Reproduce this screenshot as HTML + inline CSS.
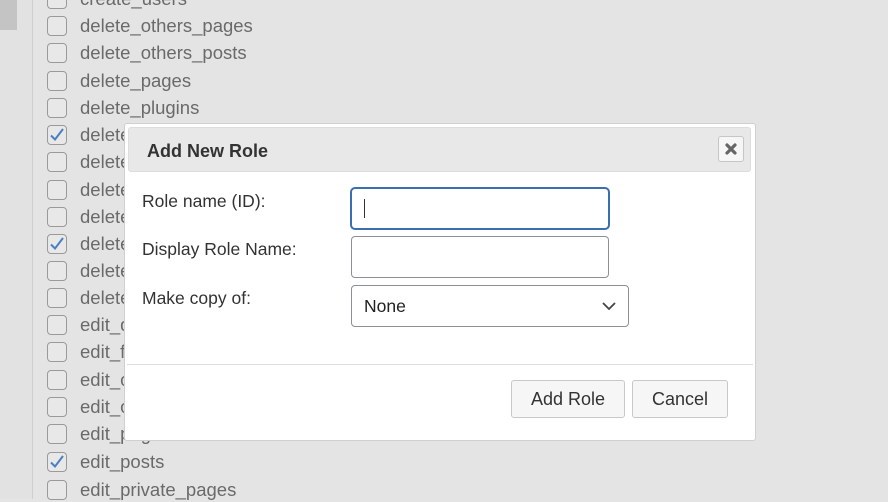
<!DOCTYPE html>
<html><head><style>
body{margin:0;width:888px;height:499px;overflow:hidden;background:#e4e4e4;font-family:"Liberation Sans",Arial,sans-serif;position:relative}
.side{position:absolute;left:0;top:0;width:32px;height:499px;border-right:1px solid #cfcfcf;background:#e2e2e2}
.side i{position:absolute;left:0;top:0;width:17px;height:30px;background:#c4c4c4}
.row{position:absolute;left:47px;height:22px;width:400px}
.cb{position:absolute;left:0;top:0;width:18px;height:18px;border:1.5px solid #9a9a9a;border-radius:4px;background:#e8e8e8}
.row span{position:absolute;left:33px;top:-1px;font-size:18.5px;color:#6a6a6a;line-height:22px;white-space:nowrap}
.dlg{position:absolute;left:124px;top:123px;width:630px;height:316px;background:#fff;border:1px solid #d0d0d0;border-radius:3px}
.tb{position:absolute;left:3px;top:3px;width:623px;height:45px;background:#e8e8e8;border:1px solid #ddd;border-radius:3px;box-sizing:border-box}
.tb b{position:absolute;left:18px;top:13px;font-size:18px;color:#333}
.x{position:absolute;left:589px;top:8px;width:26px;height:26px;border:1px solid #c6c6c6;border-radius:3px;background:#f6f6f6;box-sizing:border-box}
.lbl{position:absolute;left:17px;font-size:17.5px;color:#333}
.in{position:absolute;box-sizing:border-box;border:1px solid #8c8f94;border-radius:4px;background:#fff}
.btn{position:absolute;top:256px;height:38px;box-sizing:border-box;border:1px solid #c8c8c8;border-radius:3px;background:#f6f6f6;font-size:18px;color:#333;text-align:center;line-height:36px}
</style></head><body>
<div class="side"><i></i></div>
<div class="row" style="top:-11px"><div class="cb"></div><span>create_users</span></div>
<div class="row" style="top:16px"><div class="cb"></div><span>delete_others_pages</span></div>
<div class="row" style="top:43px"><div class="cb"></div><span>delete_others_posts</span></div>
<div class="row" style="top:71px"><div class="cb"></div><span>delete_pages</span></div>
<div class="row" style="top:98px"><div class="cb"></div><span>delete_plugins</span></div>
<div class="row" style="top:125px"><div class="cb"><svg width="18" height="18" viewBox="0 0 18 18"><path d="M3 9.5 L7 13.5 L15 3" stroke="#4a7fc1" stroke-width="2" fill="none"/></svg></div><span>delete_posts</span></div>
<div class="row" style="top:152px"><div class="cb"></div><span>delete_private_pages</span></div>
<div class="row" style="top:180px"><div class="cb"></div><span>delete_private_posts</span></div>
<div class="row" style="top:207px"><div class="cb"></div><span>delete_published_pages</span></div>
<div class="row" style="top:234px"><div class="cb"><svg width="18" height="18" viewBox="0 0 18 18"><path d="M3 9.5 L7 13.5 L15 3" stroke="#4a7fc1" stroke-width="2" fill="none"/></svg></div><span>delete_published_posts</span></div>
<div class="row" style="top:261px"><div class="cb"></div><span>delete_themes</span></div>
<div class="row" style="top:288px"><div class="cb"></div><span>delete_users</span></div>
<div class="row" style="top:315px"><div class="cb"></div><span>edit_dashboard</span></div>
<div class="row" style="top:342px"><div class="cb"></div><span>edit_files</span></div>
<div class="row" style="top:370px"><div class="cb"></div><span>edit_others_pages</span></div>
<div class="row" style="top:397px"><div class="cb"></div><span>edit_others_posts</span></div>
<div class="row" style="top:424px"><div class="cb"></div><span>edit_pages</span></div>
<div class="row" style="top:452px"><div class="cb"><svg width="18" height="18" viewBox="0 0 18 18"><path d="M3 9.5 L7 13.5 L15 3" stroke="#4a7fc1" stroke-width="2" fill="none"/></svg></div><span>edit_posts</span></div>
<div class="row" style="top:480px"><div class="cb"></div><span>edit_private_pages</span></div>

<div class="dlg">
<div class="tb"><b>Add New Role</b>
<div class="x"><svg width="24" height="24" viewBox="0 0 24 24"><path d="M8 8 L16 16 M16 8 L8 16" stroke="#666" stroke-width="3.2" stroke-linecap="round"/></svg></div></div>
<div class="lbl" style="top:67px">Role name (ID):</div>
<div class="lbl" style="top:115px">Display Role Name:</div>
<div class="lbl" style="top:164px">Make copy of:</div>
<div class="in" style="left:225px;top:63px;width:260px;height:43px;border:2px solid #3a6fb0;border-radius:5px"><div style="position:absolute;left:12px;top:10px;width:1px;height:19px;background:#333"></div></div>
<div class="in" style="left:226px;top:112px;width:258px;height:42px"></div>
<div class="in" style="left:226px;top:161px;width:278px;height:42px"><span style="position:absolute;left:12px;top:10px;font-size:17.5px;color:#222">None</span><svg style="position:absolute;right:11px;top:13px" width="16" height="14" viewBox="0 0 16 14"><path d="M2 4 L8 10 L14 4" stroke="#444" stroke-width="1.8" fill="none"/></svg></div>
<div style="position:absolute;left:2px;top:240px;width:626px;height:1px;background:#dedede"></div>
<div class="btn" style="left:386px;width:114px">Add Role</div>
<div class="btn" style="left:507px;width:96px">Cancel</div>
</div>
</body></html>
